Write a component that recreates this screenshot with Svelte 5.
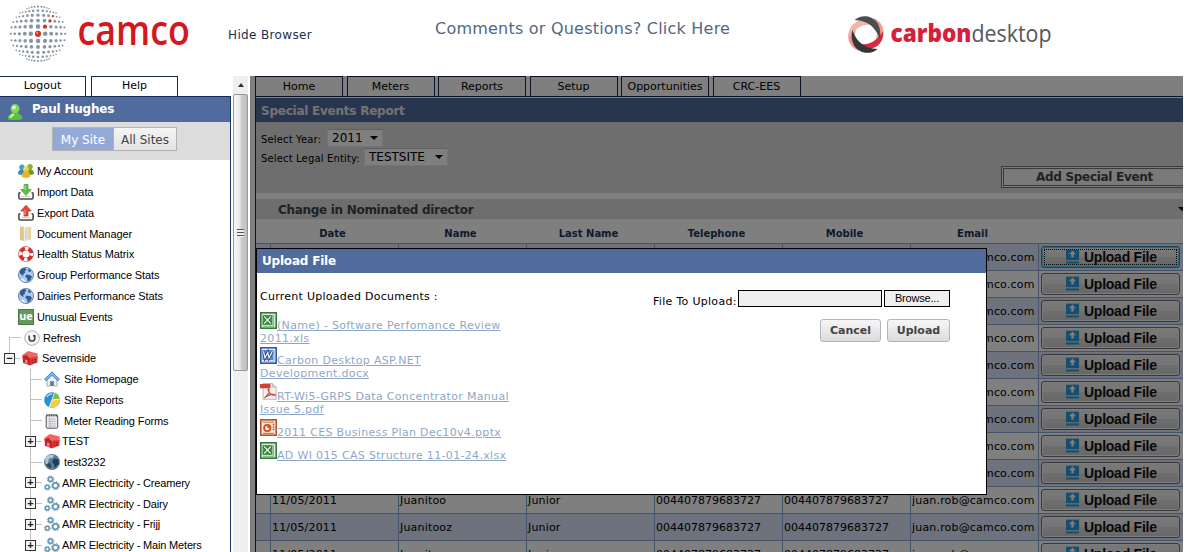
<script>
  const offs = [0, 7.2, 13.2, 18.6, 23.2, 27.2];
  const dots = [];
  for (let i = -5; i <= 5; i++) {
    for (let j = -5; j <= 5; j++) {
      const oy = Math.sign(j) * offs[Math.abs(j)];
      const ox = Math.sign(i) * offs[Math.abs(i)];
      const x = ox * Math.sqrt(1 - (oy / 31) ** 2);
      const y = oy * Math.sqrt(1 - (ox / 60) ** 2);
      const d = Math.hypot(ox, oy);
      if (Math.abs(i) === 5 && Math.abs(j) === 5) continue;
      const red = i === -j && i >= 0 && i < 4;
      dots.push({ x: 38 + x, y: 33.8 + y, r: i === 0 && j === 0 ? 3.1 : Math.max(0.8, 2.7 - d * 0.058), red });
    }
  }

  const menu = [
    ['users', 'My Account'], ['import', 'Import Data'], ['export', 'Export Data'],
    ['folder', 'Document Manager'], ['ring', 'Health Status Matrix'], ['globe', 'Group Performance Stats'],
    ['globe', 'Dairies Performance Stats'], ['ue', 'Unusual Events']
  ];
  const tree = [
    ['home', 'Site Homepage', false], ['pie', 'Site Reports', false], ['pad', 'Meter Reading Forms', false],
    ['barn', 'TEST', true], ['earth', 'test3232', false], ['gears', 'AMR Electricity - Creamery', true],
    ['gears', 'AMR Electricity - Dairy', true], ['gears', 'AMR Electricity - Frijj', true],
    ['gears', 'AMR Electricity - Main Meters', true]
  ];
  const tabs = ['Home', 'Meters', 'Reports', 'Setup', 'Opportunities', 'CRC-EES'];
  const columns = ['Date', 'Name', 'Last Name', 'Telephone', 'Mobile', 'Email'];
  const rows = Array.from({ length: 12 }, (_, i) => ({
    date: '11/05/2011', name: i === 10 ? 'Juanitooz' : 'Juanitoo', last: 'Junior',
    tel: '004407879683727', mobile: '004407879683727', email: 'juan.rob@camco.com'
  }));
  const docs = [
    ['xls', '(Name) - Software Perfomance Review', '2011.xls', 35],
    ['doc', 'Carbon Desktop ASP.NET', 'Development.docx', 36],
    ['pdf', 'RT-Wi5-GRPS Data Concentrator Manual', 'Issue 5.pdf', 36],
    ['ppt', '2011 CES Business Plan Dec10v4.pptx', '', 23],
    ['xls', 'AD WI 015 CAS Structure 11-01-24.xlsx', '', 23]
  ];
</script>

{#snippet icon(name)}
  <svg class="ico" width="16" height="16" viewBox="0 0 16 16">
    {#if name === 'users'}
      <circle cx="4" cy="4.2" r="2.7" fill="#3a9fc9" /><path d="M0 11Q0 6.5 4 6.5T8 11Q4 13 0 11Z" fill="#2b8fbb" />
      <circle cx="12" cy="3.7" r="2.8" fill="#7db83c" /><path d="M8 11Q8 6.2 12 6.2T16 11Q12 13 8 11Z" fill="#5fa02b" />
      <circle cx="8" cy="6.2" r="3" fill="#f8c848" /><path d="M3.6 13.8Q3.6 8.6 8 8.6T12.4 13.8Q8 16 3.6 13.8Z" fill="#eeb02a" />
      <circle cx="7.2" cy="5.3" r="1.1" fill="#fdeaa4" />
    {:else if name === 'import' || name === 'export'}
      <path d="M2.5 8.8H1.6Q.9 8.8.9 9.7V13.6Q.9 15 2.2 15H13.8Q15.1 15 15.1 13.6V9.7Q15.1 8.8 14.4 8.8H13.5" fill="none" stroke="#4b4b4b" stroke-width="1.6" />
      <path d="M3.5 12.6H12.5" stroke="#c8c8c8" />
      {#if name === 'import'}
        <path d="M6 .5H10V5.5H13.2L8 11.5L2.8 5.5H6Z" fill="#69bb43" stroke="#459b2a" stroke-width=".7" /><path d="M7 1.5V6" stroke="#b8e59c" />
      {:else}
        <path d="M6 11H10V6H13.2L8 .3L2.8 6H6Z" fill="#de4937" stroke="#b52b20" stroke-width=".7" /><path d="M7 10V5" stroke="#f5a091" />
      {/if}
    {:else if name === 'folder'}
      <path d="M2 1L6 .2V15L2 14Z" fill="#dcc68a" /><path d="M5.5 1L11.5 2V13.5L6 15.7Z" fill="#f2eedb" /><path d="M7 1.5L13.2 1V13.5L10 14.2V4.2Z" fill="#e8d6a2" /><path d="M7 3L9.5 4V13L7 14.5Z" fill="#c9d6db" />
    {:else if name === 'ring'}
      <circle cx="8" cy="8" r="5.6" fill="none" stroke="#d92c25" stroke-width="4" />
      <circle cx="8" cy="8" r="5.6" fill="none" stroke="#f8f5f5" stroke-width="3.8" stroke-dasharray="3.6 5.2" stroke-dashoffset="1.8" />
      <circle cx="8" cy="8" r="7.6" fill="none" stroke="#c55" stroke-width=".5" />
    {:else if name === 'globe'}
      <circle cx="8" cy="8" r="7.6" fill="#a9c8ec" stroke="#46658f" stroke-width=".7" />
      <path d="M2 3.2Q4.5.5 7.2 1L8.5 3L6.6 4.2L7.2 5.8L5 7L6 8.5L4.4 8.6L2 6.4Z M8.3 7.6L12.6 8.2L14 10Q12.5 13.8 9.7 15L9.2 11.6L7.2 9.5Z M10.2 1.6L13 3.2L12.6 5L10.2 4.4Z" fill="#345a92" />
      <path d="M2.6 12Q6 10 7.6 15Q4 14.7 2.6 12Z" fill="#e6f1fb" />
    {:else if name === 'ue'}
      <rect x=".5" y=".5" width="15" height="15" fill="#65995a" stroke="#4b7b44" /><text x="1.3" y="10.6" font-size="11" font-weight="700" textLength="13.4" lengthAdjust="spacingAndGlyphs" font-family="Open Sans, sans-serif" fill="#fff">ue</text>
    {:else if name === 'refresh'}
      <circle cx="8" cy="8" r="7.4" fill="#eee" stroke="#aaa" stroke-width=".8" /><circle cx="8" cy="8" r="5.6" fill="#fafafa" />
      <path d="M5.2 5.5V8.2A2.8 2.8 0 0 0 10.8 8.2V5.8H9" fill="none" stroke="#484b55" stroke-width="1.7" />
    {:else if name === 'barn'}
      <path d="M0 5.3L6 1L15.5 3.5L16 8.5L8.5 8L4.8 4.4L.5 8Z" fill="#ee6660" /><path d="M.6 6.8L4.7 4.4L8 8V15.5L1 12.7Z" fill="#c4222a" /><path d="M8 7.5L15.5 7V12.4L8 15.5Z" fill="#dd3a3e" />
      <path d="M3 9.5L5.5 10V14L3 13Z" fill="#ea7f7b" /><path d="M9.7 10H11.2M12.5 9.6H14M9.7 12.5H11.2M12.5 11.9H14" stroke="#8c1519" stroke-width="1.1" />
    {:else if name === 'home'}
      <path d="M3 8V15H6.3V10.5H9.7V15H13V8L8 3Z" fill="#eef2f6" stroke="#8d9aa8" stroke-width=".8" /><path d="M6.3 10.5H9.7V15H6.3Z" fill="#69778a" />
      <path d="M8 .8L15.5 8.3L13.8 9.8L8 4.3L2.2 9.8L.5 8.3Z" fill="#72b7ee" stroke="#2d70ba" stroke-width=".8" />
    {:else if name === 'pie'}
      <circle cx="8" cy="8" r="7.8" fill="#2891d2" /><path d="M8 8L10.5.6A7.8 7.8 0 0 1 15 11.5Z" fill="#7abf42" /><path d="M8 8L15.7 7A7.8 7.8 0 0 1 5 15.2Z" fill="#f5cf42" /><path d="M5 15.2L8 8L10.5.6M8 8L15.7 7" stroke="#fff" stroke-width=".8" fill="none" /><path d="M3 5Q4 2 8 2" stroke="#9cdcf8" stroke-width="1.5" fill="none" />
    {:else if name === 'pad'}
      <rect x="2.2" y="2" width="11.5" height="13.2" rx="1" fill="#ececf0" stroke="#505258" /><path d="M2.2 2.5H13.7" stroke="#555" stroke-width="2" stroke-dasharray="1.2 1.2" /><path d="M4.5 6.2H11.7M4.5 8.5H11.7M4.5 10.8H11.7M4.5 13H11.7M5.8 4V14.5" stroke="#a5a7af" stroke-width=".7" />
    {:else if name === 'earth'}
      <circle cx="8" cy="8" r="7.7" fill="#587f9d" stroke="#526575" stroke-width=".5" /><path d="M1 4.5Q4-.5 10 1L8.7 4L5 4.6L4 9L2 10.5Z" fill="#b1c9d8" /><path d="M8 8L10 4.5L14.5 5.5L14.8 10L10.5 14L10 10.2Z" fill="#223c51" /><path d="M2 11L6 8.6L7.4 11.7L6.6 15Z" fill="#2b4960" />
    {:else if name === 'gears'}
      <g fill="none" stroke="#6898b5"><circle cx="6.5" cy="4.2" r="2.1" stroke-width="1.6" /><circle cx="6.5" cy="4.2" r="3.3" stroke-width="1" stroke-dasharray="1.3 1.3" /><circle cx="11.5" cy="10.6" r="2.8" stroke-width="1.7" /><circle cx="11.5" cy="10.6" r="4" stroke-width="1" stroke-dasharray="1.6 1.55" /><circle cx="3.3" cy="12.2" r="1.9" stroke-width="1.5" /><circle cx="3.3" cy="12.2" r="2.9" stroke-width=".9" stroke-dasharray="1.2 1.1" /></g>
    {:else if name === 'person'}
      <path d="M.8 15.2Q0 11.5 4.3 9.5L5.5 7.5H10.5L11.7 9.5Q16 11.5 15.2 15.2Q8 17 .8 15.2Z" fill="#5cc03c" /><circle cx="8" cy="4.6" r="4.5" fill="#7fd65b" /><circle cx="7" cy="3.4" r="2" fill="#d5f7c3" /><path d="M3.5 14Q3.5 11.5 7 10.5" stroke="#c8f3b6" stroke-width="2" fill="none" />
    {/if}
  </svg>
{/snippet}

{#snippet doc(kind)}
  <svg class="dico" width="17" height="17" viewBox="0 0 17 17">
    {#if kind === 'xls'}
      <rect x=".8" y=".8" width="15.4" height="15.4" fill="#d9eed6" stroke="#2d7237" stroke-width="1.5" /><rect x="2.5" y="3" width="10" height="10" fill="#4c9650" /><path d="M13.5 3V14M3 14.3H14" stroke="#8cc28a" stroke-width="1.2" /><path d="M4 4.5L11 11.5M11 4.5L4 11.5" stroke="#1d5c28" stroke-width="3" /><path d="M4.2 4.5L10.8 11.5M10.8 4.5L4.2 11.5" stroke="#e4f4e2" stroke-width="1.4" />
    {:else if kind === 'doc'}
      <rect x=".8" y=".8" width="15.4" height="15.4" fill="#e3edfc" stroke="#28508f" stroke-width="1.5" /><rect x="2.5" y="3" width="11" height="10" fill="#5d86ca" /><path d="M14.2 3V14M3 14.3H14" stroke="#9db8e0" /><path d="M3.5 4.3L5 10.8L7.8 5.5L9 10.8L12.4 4.3" fill="none" stroke="#1f3f88" stroke-width="2.8" /><path d="M3.5 4.3L5 10.8L7.8 5.5L9 10.8L12.4 4.3" fill="none" stroke="#fff" stroke-width="1.2" />
    {:else if kind === 'pdf'}
      <path d="M3 .5H12.5L16.2 4V16.3H3Z" fill="#f0f0f0" stroke="#aaa" stroke-width=".8" /><path d="M12.5.5V4H16.2" fill="#ddd" stroke="#aaa" stroke-width=".7" /><rect x="0" y="1" width="10.5" height="4.3" fill="#cf4236" /><path d="M4.5 15Q9.5 11 9 6.5Q8.8 5.2 8 6.3C8 10 12 12.5 15.3 12.3C16 10.8 8.5 10.5 4.5 15Z" fill="none" stroke="#c8463d" stroke-width="1.1" />
    {:else}
      <rect x=".8" y=".8" width="15.4" height="15.4" fill="#fbe6d7" stroke="#ad4b25" stroke-width="1.5" /><path d="M2.5 3.2H14M3 14.3H14" stroke="#d68058" stroke-width="1.2" /><circle cx="7.3" cy="9" r="4.1" fill="#c55024" /><circle cx="7.3" cy="9" r="2.2" fill="#fff0e6" /><path d="M7.3 9V6.5A2.5 2.5 0 0 1 9.8 9Z" fill="#c55024" /><path d="M12.8 5.5H14.2M12.8 8H14.2M12.8 10.5H14.2" stroke="#b4491f" stroke-width="1.3" />
    {/if}
  </svg>
{/snippet}

<div class="page">
  <header>
    <svg class="camco" width="200" height="70">
      {#each dots as d}<circle cx={d.x} cy={d.y} r={d.r} fill={d.red ? '#d5331f' : '#8797a1'} />{/each}
      <circle cx="37.2" cy="33" r="1" fill="#f4a08c" />
      <text x="77.5" y="45" font-size="41" font-weight="600" textLength="112.5" lengthAdjust="spacingAndGlyphs" fill="#d41820">camco</text>
    </svg>
    <a class="hide">Hide Browser</a>
    <a class="comments">Comments or Questions? Click Here</a>
    <svg class="carbon" width="220" height="70">
      <g transform="translate(26 34.5)">
        <path transform="rotate(62)" d="M-11 -14C-2 -23 17 -18 15 3C11 -8 3 -13 -11 -14Z" fill="#ee9d90" />
        <path transform="rotate(242)" d="M-11 -14C-2 -23 17 -18 15 3C11 -8 3 -13 -11 -14Z" fill="#ee9488" />
        <path transform="rotate(300)" d="M-11 -13C-2 -21 15 -16 12 3C9 -7 3 -12 -11 -13Z" fill="#f2b5aa" />
        <path transform="rotate(120)" d="M-11 -13C-2 -21 15 -16 12 3C9 -7 3 -12 -11 -13Z" fill="#d82a43" />
        <path transform="rotate(2)" d="M-12 -14C-3 -23 17 -18 14 4C9 -8 1 -14 -12 -14Z" fill="#4b4d4f" />
        <path transform="rotate(182)" d="M-12 -14C-3 -23 17 -18 14 4C9 -8 1 -14 -12 -14Z" fill="#34373a" />
      </g>
      <text x="50.5" y="42" font-size="24.5" font-weight="800" textLength="81" lengthAdjust="spacingAndGlyphs" fill="#d5203b">carbon</text>
      <text x="131.5" y="42" font-size="24.5" font-weight="400" textLength="80" lengthAdjust="spacingAndGlyphs" fill="#55575a">desktop</text>
    </svg>
  </header>

  <div class="body">
    <aside>
      <div class="sidetabs"><span>Logout</span><span>Help</span></div>
      <div class="panel">
        <div class="bar user">{@render icon('person')}<b>Paul Hughes</b></div>
        <div class="switch"><span class="on">My Site</span><span>All Sites</span></div>
        <div class="nav">
          {#each menu as [ic, label]}
            <div class="item top">{@render icon(ic)}<span>{label}</span></div>
          {/each}
          <div class="item refresh"><i class="elbow"></i>{@render icon('refresh')}<span>Refresh</span></div>
          <div class="item root"><i class="box">−</i><i class="dash"></i>{@render icon('barn')}<span>Severnside</span></div>
          {#each tree as [ic, label, open]}
            <div class="item leaf" class:wide={open}>
              <i class="rail">{#if open}<i class="box">+</i>{/if}</i>{@render icon(ic)}<span>{label}</span>
            </div>
          {/each}
        </div>
      </div>
    </aside>
    <div class="scroll"><div class="up"></div><div class="thumb"><i></i></div></div>

    <main>
      <div class="tabs">{#each tabs as t}<span>{t}</span>{/each}</div>
      <div class="content">
        <div class="bar title"><b>Special Events Report</b></div>
        <div class="filters">
          <div class="f1"><label>Select Year:</label><span class="select y">2011<i></i></span></div>
          <div class="f2"><label>Select Legal Entity:</label><span class="select e">TESTSITE<i></i></span></div>
          <button class="add">Add Special Event</button>
        </div>
        <div class="section"><b>Change in Nominated director</b><i></i></div>
        <div class="thead"><span></span>{#each columns as c}<b>{c}</b>{/each}</div>
        {#each rows as r, i}
          <div class="row" class:alt={i % 2 === 0}>
            <span></span><span>{r.date}</span><span>{r.name}</span><span>{r.last}</span><span class="num">{r.tel}</span><span class="num">{r.mobile}</span><span>{r.email}</span>
            <span class="act"><button class="up-btn" class:focus={i === 0}>
              <svg width="13" height="15" viewBox="0 0 13 15"><rect width="13" height="15" fill="#a5d6ee" /><rect y="1" width="13" height="10" fill="#2f9ddd" /><rect y="12.5" width="13" height="2" fill="#3d9ad0" /><path d="M6.5 1.5L10 5.3H7.7V8.5H5.3V5.3H3Z" fill="#fff" /></svg>
              <b>Upload File</b></button></span>
          </div>
        {/each}
      </div>
      <div class="shade"></div>
    </main>
  </div>

  <section class="modal">
    <div class="bar"><b>Upload File</b></div>
    <div class="mbody">
      <div class="docs">
        <p>Current Uploaded Documents :</p>
        {#each docs as [kind, a, b, h]}
          <div class="doc" style:height="{h}px">
            <div class="first">{@render doc(kind)}<a>{a}</a></div>
            {#if b}<a>{b}</a>{/if}
          </div>
        {/each}
      </div>
      <div class="form">
        <div class="file"><label>File To Upload:</label><span class="inp"></span><button class="browse">Browse...</button></div>
        <div class="btns"><button>Cancel</button><button>Upload</button></div>
      </div>
    </div>
  </section>
</div>

<style>
  :global(body) { background: #fff; overflow: hidden; }
  .page { width: 1184px; height: 552px; overflow: hidden; position: relative; font: 11px/14px "DejaVu Sans", sans-serif; color: #000; }
  .page * { box-sizing: border-box; }
  svg { display: block; flex: none; }
  span, b, label, a, p { white-space: nowrap; }
  button { font: inherit; padding: 0; white-space: nowrap; }
  header { height: 76px; display: flex; align-items: flex-start; }
  header svg { overflow: visible; }
  header svg text { font-family: "Open Sans", sans-serif; }
  .hide { margin: 27px 0 0 28px; width: 207px; font-size: 12px; line-height: 16px; letter-spacing: .36px; color: #1a2f50; }
  .comments { margin-top: 18px; width: 405px; font-size: 16px; line-height: 22px; letter-spacing: .22px; color: #506886; }
  .body { display: flex; height: 476px; }

  aside { width: 231px; display: flex; flex-direction: column; flex: none; }
  .sidetabs { display: flex; gap: 5px; height: 20px; }
  .sidetabs span { width: 87px; border: 1px solid #142a55; border-bottom: 0; text-align: center; line-height: 18px; }
  .sidetabs span:first-child { border-left: 0; width: 86px; }
  .panel { flex: 1; min-height: 0; border-top: 1px solid #142a55; border-right: 1px solid #16365f; overflow: hidden; }
  .bar { background: #506b9d; color: #fff; font-size: 12px; letter-spacing: -.2px; display: flex; align-items: center; }
  .user { height: 25px; padding-left: 7px; }
  .user .ico { margin: 5px 9px 0 0; }
  .user b { margin-top: -2px; }
  .switch { height: 38px; background: #dcdcdc; display: flex; padding: 5px 0 0 52px; font-size: 12px; }
  .switch span { height: 24px; width: 64px; border: 1px solid #b3b3b3; line-height: 24px; text-align: center; color: #444; background: linear-gradient(#f5f5f5, #e2e2e2); }
  .switch .on { width: 61px; background: #94aad6; color: #fff; border-right: 0; }
  .nav { padding-top: 1px; font: 11px/16px "Liberation Sans", sans-serif; }
  .item { height: 20.78px; display: flex; align-items: center; position: relative; }
  .item > span { letter-spacing: -.1px; margin-left: 3px; }
  .top { padding-left: 18px; }
  .refresh { padding-left: 24px; }
  .elbow { position: absolute; left: 9px; top: 10px; width: 12px; height: 16px; border: solid #c4c4c4; border-width: 1px 0 0 1px; }
  .root { padding-left: 4px; }
  .root > span { margin-left: 4px; }
  .box { position: relative; width: 11px; height: 11px; border: 1px solid #333; background: #f4f4f4; font: 700 11px/9px "Liberation Sans", sans-serif; text-align: center; flex: none; color: #222; }
  .dash { width: 5px; height: 1px; background: #c0c0c0; margin-right: 2px; }
  .leaf { padding-left: 25px; }
  .leaf > span { margin-left: 4px; }
  .leaf.wide > span { margin-left: 2px; letter-spacing: -.18px; }
  .rail { width: 19px; height: 21px; flex: none; display: flex; align-items: center; background: linear-gradient(#c0c0c0, #c0c0c0) 5px 0 / 1px 100% no-repeat, linear-gradient(#c0c0c0, #c0c0c0) 5px 50% / 12px 1px no-repeat; }

  .scroll { width: 15px; margin: 0 2px; flex: none; background: #efefef; display: flex; flex-direction: column; }
  .up { height: 18px; display: grid; place-items: center; }
  .up::after { content: ""; border: solid transparent; border-width: 0 3.5px 4px; border-bottom-color: #333; }
  .thumb { height: 277px; border: 1px solid #979797; border-radius: 2px; background: linear-gradient(90deg, #f6f6f6, #e8e8e8 45%, #cfcfd2 55%, #bdbdc0); display: grid; place-items: center; }
  .thumb i { width: 7px; height: 8px; background: repeating-linear-gradient(#555 0 1px, #eee 1px 3px); }

  main { flex: 1; min-width: 0; position: relative; overflow: hidden; padding: 0 1px 0 5px; }
  .shade { position: absolute; inset: 0 1px 0 0; background: rgba(0, 0, 0, .5); }
  .tabs { display: flex; gap: 3.5px; height: 21px; border-bottom: 1px solid #16264f; }
  .tabs span { width: 88px; flex: none; border: 1px solid #16264f; border-bottom: 0; text-align: center; line-height: 20px; }
  .content { border-left: 1px solid #16264f; padding-top: 1px; overflow: hidden; }
  .title { height: 24px; padding-left: 5px; color: #e6e6e6; }
  .title b { margin-top: 1px; letter-spacing: -.24px; }
  .filters { height: 71px; background: #dcdcdc; position: relative; padding: 7px 0 0 5px; }
  .f1, .f2 { height: 19px; display: flex; align-items: flex-start; font-size: 10px; }
  .filters label { margin-top: 4px; letter-spacing: .15px; flex: none; }
  .f1 label { width: 66px; }
  .f2 label { width: 103px; }
  .select { height: 18px; background: #fff; border: 1px solid #e8e8e8; border-top-color: #c0c0c0; font-size: 12px; line-height: 17px; padding-left: 4px; display: flex; }
  .select i { border: solid transparent; border-width: 4px 4px 0; border-top-color: #000; margin: 6px 4px 0 auto; height: 0; }
  .y { width: 56px; }
  .e { width: 84px; }
  .add { position: absolute; left: 745px; top: 44px; width: 190px; height: 22px; border: 3px double #777; background: #f4f4f4; font-weight: 700; font-size: 12px; letter-spacing: -.3px; color: #444; text-align: left; padding-left: 32px; }
  .section { height: 20px; margin-top: 6px; background: #dcdcdc; display: flex; align-items: center; padding-left: 22px; font-size: 12px; letter-spacing: -.3px; color: #444; overflow: hidden; }
  .section b { margin-top: 1px; }
  .section i { border: solid transparent; border-width: 4px 4px 0; border-top-color: #000; margin-left: auto; margin-right: -3px; }
  .thead, .row { display: grid; grid-template-columns: 14px repeat(6, 128px) 1fr; }
  .thead { height: 24px; text-align: center; color: #1a365c; line-height: 29px; font-size: 10px; }
  .thead b { padding-right: 3px; }
  .row { height: 27px; border-top: 1px solid #8ea6d0; line-height: 27px; }
  .alt { background: #dae4f8; }
  .row > span { border-left: 1px solid #8ea6d0; padding-left: 1px; overflow: hidden; letter-spacing: .18px; }
  .row > .num { letter-spacing: 0; }
  .row > span:first-child { border-left: 0; }
  .row .act { padding: 2px 0 0 2px; }
  .up-btn { display: flex; width: 139px; height: 22px; border: 1px solid #707070; border-radius: 3px; background: linear-gradient(#f2f2f2, #ebebeb 50%, #ddd 50%, #cfcfcf); box-shadow: inset 0 0 0 1px #fafafa; padding: 1px 0 0 24px; font: 700 14px/18px "Liberation Sans", sans-serif; letter-spacing: -.25px; color: #111; gap: 5px; }
  .up-btn svg { margin-top: 1px; }
  .focus { border: 1px solid #3590b5; box-shadow: inset 0 0 0 1px #62c6e8; outline: 1px dotted #000; outline-offset: -4px; }

  .modal { position: absolute; left: 256px; top: 248px; width: 731px; height: 247px; background: #fff; border: 1px solid #000; }
  .modal .bar { height: 24px; padding-left: 5px; }
  .mbody { display: flex; }
  .docs { width: 396px; padding: 16px 0 0 3px; }
  .docs p { margin: 1px 0 8px; letter-spacing: .26px; }
  .doc { line-height: 13px; color: #8fa7c6; letter-spacing: .33px; }
  .first { display: flex; height: 20px; align-items: flex-start; }
  .first a { margin-top: 7px; }
  .doc > a { display: block; }
  .doc a { text-decoration: underline; }
  .form { width: 297px; padding-top: 17px; }
  .file { display: flex; height: 17px; }
  .file label { width: 85px; margin-top: 5px; letter-spacing: .3px; }
  .inp { width: 144px; height: 17px; border: 1px solid #000; background: #efefef; margin-right: 2px; }
  .browse { width: 66px; height: 17px; border: 1px solid #000; background: #efefef; font: 11px/15px "Liberation Sans", sans-serif; letter-spacing: -.2px; }
  .btns { display: flex; justify-content: flex-end; gap: 6px; margin-top: 12px; }
  .btns button { height: 23px; width: 63px; border: 1px solid #b5b5b5; border-radius: 3px; background: linear-gradient(#f6f6f6, #dcdcdc); color: #444; font-weight: 700; }
  .btns button:first-child { width: 61px; }
</style>
